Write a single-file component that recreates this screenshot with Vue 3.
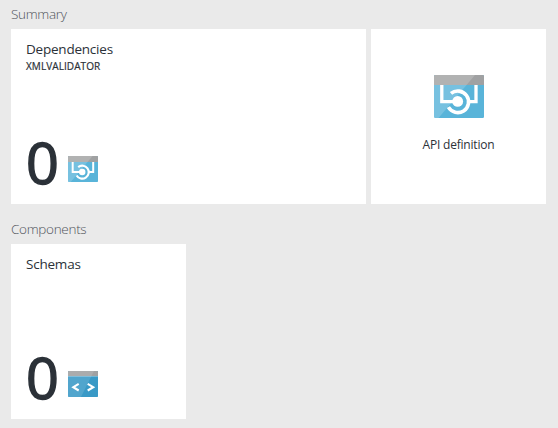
<script setup>
import { h } from 'vue'

const ApiIcon = () =>
  h('svg', { viewBox: '0 0 50 43' }, [
    h('rect', { width: 50, height: 43, rx: 1.2, fill: '#59b4d9' }),
    h('path', { d: 'M0 10V1.2Q0 0 1.2 0H48.8Q50 0 50 1.2V10Z', fill: '#a0a1a2' }),
    h('path', { d: 'M1.2 0H41L4.5 43H1.2Q0 43 0 41.8V1.2Q0 0 1.2 0Z', fill: '#fff', 'fill-opacity': 0.18 }),
    h('g', { fill: 'none', stroke: '#fff', 'stroke-width': 3.3 }, [
      h('path', { d: 'M7.8 10V26.6H20' }),
      h('path', { d: 'M42 10V26.6H34' }),
      h('path', { d: 'M17 18.4A10.8 10.8 0 1 1 14.4 32.2', 'stroke-width': 3.6 }),
    ]),
    h('circle', { cx: 23.7, cy: 26.4, r: 5.4, fill: '#fff' }),
  ])

const SchemaIcon = () =>
  h('svg', { viewBox: '0 0 30 26' }, [
    h('rect', { width: 30, height: 26, rx: 0.7, fill: '#3999c6' }),
    h('path', { d: 'M0 6V.7Q0 0 .7 0H29.3Q30 0 30 .7V6Z', fill: '#a0a1a2' }),
    h('path', { d: 'M0 5H30V6H0Z', fill: '#6fb6d6' }),
    h('path', { d: 'M.7 0H26L13 26H.7Q0 26 0 25.3V.7Q0 0 .7 0Z', fill: '#fff', 'fill-opacity': 0.12 }),
    h('path', { d: 'M10.7 12.9L5.3 16.2L10.7 19.5M19.7 12.9L25.2 16.2L19.7 19.5', fill: 'none', stroke: '#fff', 'stroke-width': 2.1 }),
  ])
</script>

<template>
  <main class="board">
    <section>
      <h2>Summary</h2>
      <div class="tiles">
        <article class="tile wide">
          <h3>Dependencies</h3>
          <p class="subtitle">XMLVALIDATOR</p>
          <div class="metric"><span class="count">0</span><ApiIcon class="small-icon" /></div>
        </article>
        <article class="tile centered">
          <ApiIcon class="large-icon" />
          <p class="caption">API definition</p>
        </article>
      </div>
    </section>
    <section>
      <h2>Components</h2>
      <div class="tiles">
        <article class="tile">
          <h3>Schemas</h3>
          <div class="metric"><span class="count">0</span><SchemaIcon class="small-icon" /></div>
        </article>
      </div>
    </section>
  </main>
</template>

<style>
body { background: #eaeaea; }
</style>

<style scoped>
.board {
  box-sizing: border-box;
  height: 428px;
  padding-left: 11px;
  background: #eaeaea;
  color: #2b3138;
  font-family: "Open Sans", "Noto Sans", sans-serif;
  overflow: hidden;
}
h2, h3, p { margin: 0; }
h2 {
  box-sizing: border-box;
  height: 29px;
  padding-top: 4px;
  color: #50545a;
  font-size: 13.5px;
  font-weight: 300;
  letter-spacing: -0.3px;
  line-height: 20px;
}
section + section { margin-top: 11px; }
.tiles { display: flex; gap: 5px; }
.tile {
  box-sizing: border-box;
  display: flex;
  flex-direction: column;
  width: 175px;
  height: 175px;
  padding: 10px 15px 0;
  background: #fff;
}
.wide { width: 355px; }
h3 { font-size: 13.5px; font-weight: 400; letter-spacing: -0.22px; line-height: 20px; }
.subtitle { font-size: 10px; letter-spacing: 0.08px; line-height: 14px; -webkit-text-stroke: 0.2px #2b3138; }
.metric { display: flex; align-items: flex-end; gap: 10px; height: 52px; margin-top: auto; margin-bottom: 13px; }
.count { width: 32px; margin-bottom: 3px; font-size: 57.5px; font-weight: 400; -webkit-text-stroke: 1.5px #2b3138; letter-spacing: -1px; line-height: 52px; }
.small-icon { display: block; width: 30px; height: 26px; margin-bottom: 9px; }
.centered { align-items: center; padding: 46px 0 0; }
.large-icon { display: block; width: 50px; height: 43px; }
.caption { margin-top: 18px; font-size: 12px; letter-spacing: -0.2px; line-height: 18px; }
</style>
